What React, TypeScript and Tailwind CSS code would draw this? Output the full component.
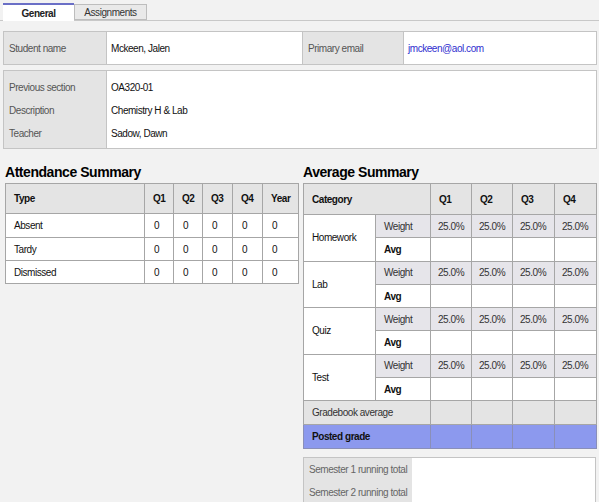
const attendance = [
  { type: "Absent", values: [0, 0, 0, 0, 0], h: "h-[24px]" },
  { type: "Tardy", values: [0, 0, 0, 0, 0], h: "h-[23px]" },
  { type: "Dismissed", values: [0, 0, 0, 0, 0], h: "h-[23px]" },
];

const categories = ["Homework", "Lab", "Quiz", "Test"];
const quarters = ["Q1", "Q2", "Q3", "Q4"];

function Tabs() {
  return (
    <div className="flex h-[21px] items-end border-b border-[#c8c8c8] pl-[3px] pt-[3px]">
      <div className="-mb-px flex h-[18px] w-[71px] items-center justify-center border-t-2 border-[#6a6fc6] bg-white font-bold text-[#222]">
        General
      </div>
      <div className="flex h-[16px] w-[73px] items-center justify-center border border-[#bdbdbd] bg-[#e9e9e9] text-[#333]">
        Assignments
      </div>
    </div>
  );
}

function StudentInfo() {
  return (
    <>
      <div className="ml-[3px] mr-[2px] mt-[10px] grid h-[34px] grid-cols-[103px_195px_102px_1fr] border border-[#c4c4c4] bg-white">
        <div className="flex items-center border-r border-[#c4c4c4] bg-[#e4e4e4] pl-[5px] text-[#555]">Student name</div>
        <div className="flex items-center pl-[4px] text-[#111]">Mckeen, Jalen</div>
        <div className="flex items-center border-x border-[#c4c4c4] bg-[#e4e4e4] pl-[5px] text-[#555]">Primary email</div>
        <div className="flex items-center pl-[4px] text-[#2f2fd0]">jmckeen@aol.com</div>
      </div>
      <div className="ml-[3px] mr-[2px] mt-[5px] grid h-[79px] grid-cols-[103px_1fr] border border-[#c4c4c4] bg-white">
        <div className="flex flex-col border-r border-[#c4c4c4] bg-[#e4e4e4] pl-[5px] pt-[5px] text-[#555]">
          <div className="flex h-[23px] items-center">Previous section</div>
          <div className="flex h-[23px] items-center">Description</div>
          <div className="flex h-[23px] items-center">Teacher</div>
        </div>
        <div className="flex flex-col pl-[4px] pt-[5px] text-[#111]">
          <div className="flex h-[23px] items-center">OA320-01</div>
          <div className="flex h-[23px] items-center">Chemistry H &amp; Lab</div>
          <div className="flex h-[23px] items-center">Sadow, Dawn</div>
        </div>
      </div>
    </>
  );
}

function AttendanceSummary() {
  return (
    <div className="w-[293px]">
      <h2 className="mb-[3px] h-[16px] text-[14px] font-bold leading-[16px] tracking-[-0.45px] text-black">Attendance Summary</h2>
      <table className="w-full table-fixed border-collapse border border-[#9c9c9c] bg-white text-[#111]">
        <colgroup>
          <col className="w-[139px]" />
          <col className="w-[29px]" />
          <col className="w-[29px]" />
          <col className="w-[30px]" />
          <col className="w-[30px]" />
          <col className="w-[36px]" />
        </colgroup>
        <thead>
          <tr className="h-[30px] bg-[#e4e4e4]">
            {["Type", "Q1", "Q2", "Q3", "Q4", "Year"].map((h) => (
              <th key={h} className="border border-[#a6a6a6] pl-[8px] text-left font-bold">
                {h}
              </th>
            ))}
          </tr>
        </thead>
        <tbody>
          {attendance.map((row) => (
            <tr key={row.type} className={row.h}>
              <td className="border border-[#a6a6a6] pl-[8px]">{row.type}</td>
              {row.values.map((v, i) => (
                <td key={i} className="border border-[#a6a6a6] pl-[9px]">
                  {v}
                </td>
              ))}
            </tr>
          ))}
        </tbody>
      </table>
    </div>
  );
}

function AverageSummary() {
  return (
    <div className="w-[293px]">
      <h2 className="mb-[3px] h-[16px] text-[14px] font-bold leading-[16px] tracking-[-0.45px] text-black">Average Summary</h2>
      <table className="w-full table-fixed border-collapse border border-[#9c9c9c] bg-white text-[#111]">
        <colgroup>
          <col className="w-[72px]" />
          <col className="w-[55px]" />
          <col className="w-[41px]" />
          <col className="w-[41px]" />
          <col className="w-[42px]" />
          <col className="w-[42px]" />
        </colgroup>
        <thead>
          <tr className="h-[31px] bg-[#e4e4e4]">
            <th colSpan={2} className="border border-[#a6a6a6] pl-[8px] text-left font-bold">
              Category
            </th>
            {quarters.map((q) => (
              <th key={q} className="border border-[#a6a6a6] pl-[8px] text-left font-bold">
                {q}
              </th>
            ))}
          </tr>
        </thead>
        <tbody>
          {categories.flatMap((c) => [
            <tr key={c + "-w"} className="h-[23.3px]">
              <td rowSpan={2} className="border border-[#a6a6a6] pl-[8px]">
                {c}
              </td>
              <td className="border border-[#a6a6a6] bg-[#e6e5ea] pl-[8px] text-[#333]">Weight</td>
              {quarters.map((q) => (
                <td key={q} className="border border-[#a6a6a6] bg-[#e6e5ea] pl-[7px] text-[#333]">
                  25.0%
                </td>
              ))}
            </tr>,
            <tr key={c + "-a"} className="h-[23.3px]">
              <td className="border border-[#a6a6a6] pl-[8px] font-bold">Avg</td>
              {quarters.map((q) => (
                <td key={q} className="border border-[#a6a6a6]"></td>
              ))}
            </tr>,
          ])}
          <tr className="h-[23.3px] bg-[#e4e4e4]">
            <td colSpan={2} className="border border-[#a6a6a6] pl-[8px] text-[#333]">
              Gradebook average
            </td>
            {quarters.map((q) => (
              <td key={q} className="border border-[#a6a6a6]"></td>
            ))}
          </tr>
          <tr className="h-[24px] bg-[#8c99ee]">
            <td colSpan={2} className="border border-[#8a8fb8] pl-[8px] font-bold">
              Posted grade
            </td>
            {quarters.map((q) => (
              <td key={q} className="border border-[#8a8fb8]"></td>
            ))}
          </tr>
        </tbody>
      </table>
      <div className="mt-[8px] grid grid-cols-[108px_1fr] border border-[#c4c4c4] bg-white">
        <div className="flex flex-col bg-[#e4e4e4] pb-[10px] pl-[5px] text-[#666]">
          <div className="flex h-[23px] items-center">Semester 1 running total</div>
          <div className="flex h-[23px] items-center">Semester 2 running total</div>
        </div>
        <div></div>
      </div>
    </div>
  );
}

export default function App() {
  return (
    <div className="h-[502px] overflow-hidden bg-[#f2f2f2] font-['Liberation_Sans',Arial,sans-serif] text-[10px] tracking-[-0.45px]">
      <Tabs />
      <StudentInfo />
      <div className="mt-[15px] flex gap-[5px] pl-[5px]">
        <AttendanceSummary />
        <AverageSummary />
      </div>
    </div>
  );
}
